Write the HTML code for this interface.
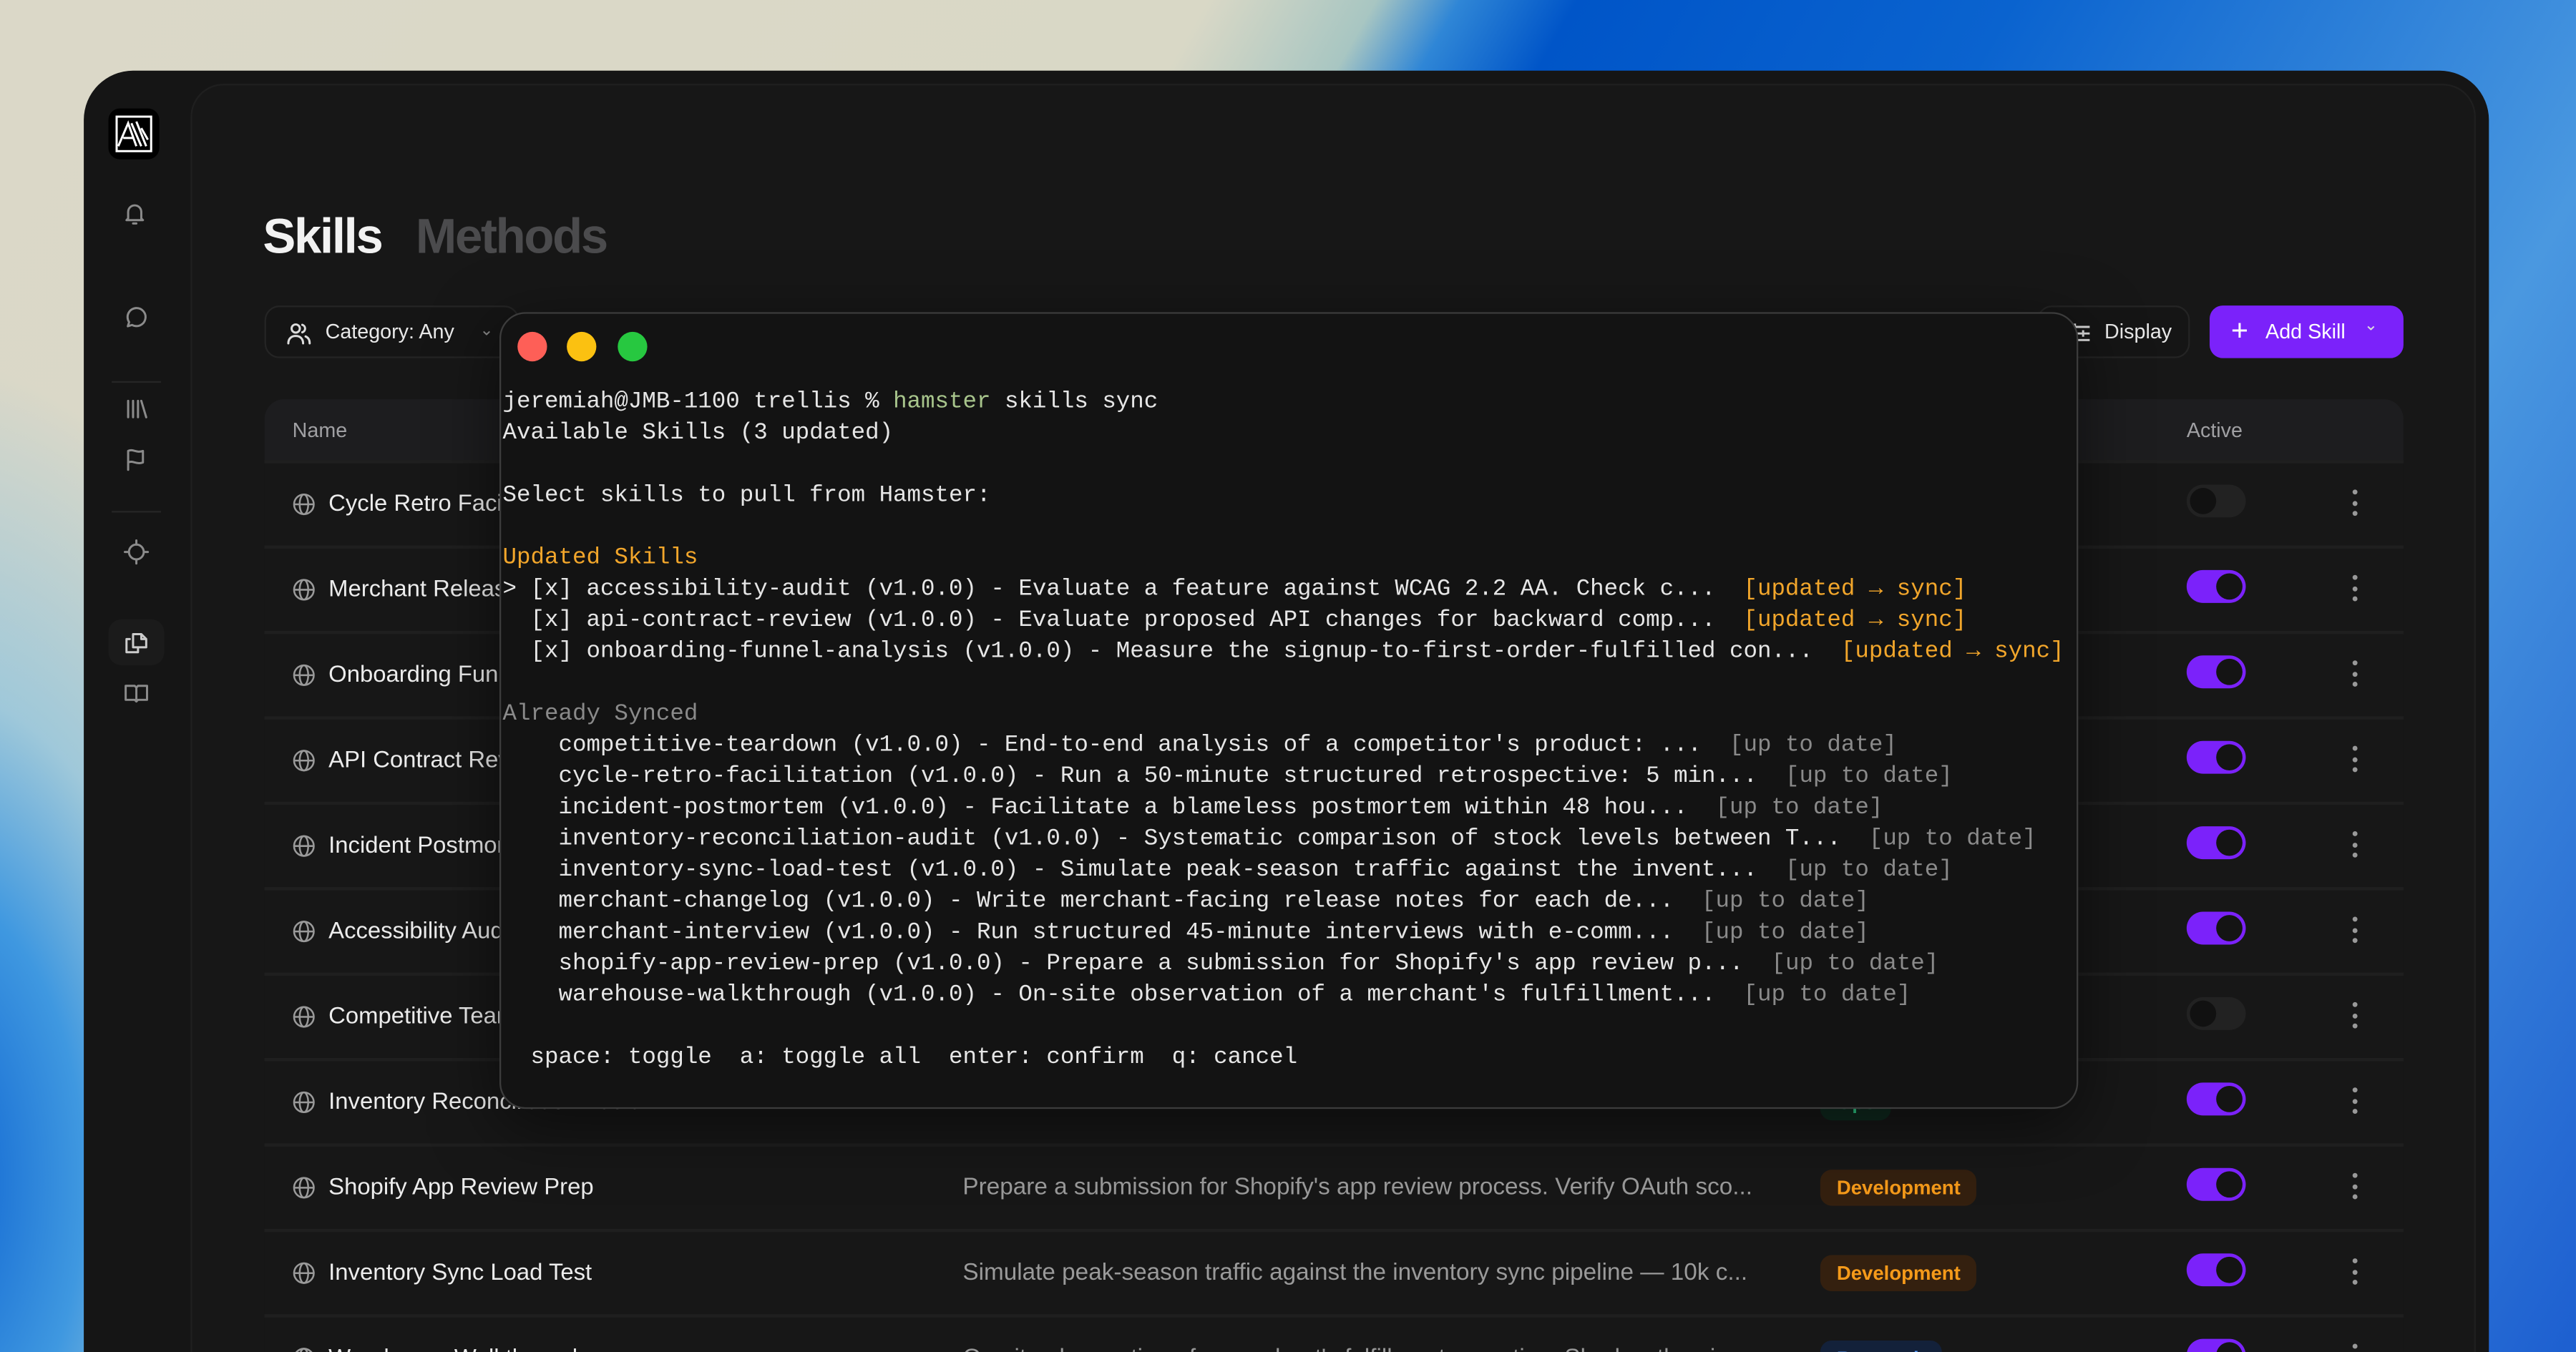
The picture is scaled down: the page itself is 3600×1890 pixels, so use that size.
<!DOCTYPE html>
<html><head><meta charset="utf-8">
<style>
*{margin:0;padding:0;box-sizing:border-box}
html,body{width:3600px;height:1890px;overflow:hidden;background:#d9d7c9}
#s{position:absolute;left:0;top:0;width:1568px;height:823px;transform:scale(2.2959,2.2965);transform-origin:0 0;overflow:hidden;font-family:"Liberation Sans",sans-serif;
background:
radial-gradient(ellipse 260px 500px at -40px 720px,#0a5fd0 0%,#3f98e0 35%,rgba(120,190,230,.6) 60%,rgba(217,215,201,0) 100%),
linear-gradient(120deg,#dbd8c8 0%,#d9d8c6 36%,#a8c6c2 41%,#2f86d6 43.5%,#0055c8 47%,#0a63cf 60%,#4a98e0 80%,#1d5fd0 100%);}
.win{position:absolute;left:51px;top:43px;width:1464px;height:820px;background:#151515;border-radius:30px}
.panel{position:absolute;left:116px;top:51px;width:1391px;height:800px;background:#171717;border:1px solid #1f1f1f;border-radius:20px}
.logo{position:absolute;left:66px;top:66px;width:31px;height:31px;background:#000;border-radius:7px}
.sep{position:absolute;left:68px;width:30px;height:1px;background:#262626}
.ic{position:absolute;width:16px;height:16px}
.ic svg{width:16px;height:16px;fill:none;stroke:#8b8b8b;stroke-width:1.3;stroke-linecap:round;stroke-linejoin:round}
.t1{position:absolute;left:160px;top:128px;font-size:30px;font-weight:bold;color:#f2f2f2;letter-spacing:-1px}
.t2{position:absolute;left:253px;top:128px;font-size:30px;font-weight:bold;color:#4b4b4d;letter-spacing:-1px}
.btn{position:absolute;top:186px;height:32px;border:1px solid #242424;border-radius:9px;background:#151515;color:#e8e8e8;font-size:12.5px;line-height:30px}
.add{position:absolute;left:1345px;top:186px;width:118px;height:32px;background:#7b22fa;border-radius:8px;color:#fff;font-size:12.5px;line-height:32px}
.table{position:absolute;left:161px;top:243px;width:1302px;height:600px;border-radius:12px;overflow:hidden;background:#171717}
.th{height:38px;background:#1d1d1f;color:#a0a0a3;font-size:12.5px;line-height:38px;position:relative}
.row{position:absolute;left:0;width:1302px;height:52px;border-top:2px solid #1f1f1f}
.row .g{position:absolute;left:17px;top:18px;width:14px;height:14px}
.row .n{position:absolute;left:39px;top:17px;color:#ececec;font-size:14.3px}
.row .d{position:absolute;left:425px;top:17px;color:#9a9a9a;font-size:14.5px}
.tag{position:absolute;left:947px;top:14px;height:22px;padding:0 10px;border-radius:7px;font-size:12px;font-weight:bold;line-height:22px}
.dev{background:#34200f;color:#f59a1a}
.tg{position:absolute;left:1170px;top:13px;width:36px;height:20px;border-radius:10px;background:#7b22fa}
.tg::after{content:"";position:absolute;right:2px;top:2px;width:16px;height:16px;border-radius:50%;background:#141414}
.tg.off{background:#222}
.tg.off::after{left:2px;right:auto;background:#111}
.kb{position:absolute;left:1271px;top:16px;width:4px;height:16px}
.kb i{display:block;width:3px;height:3px;border-radius:50%;background:#999;margin-bottom:3.5px}
.term{position:absolute;left:304px;top:190px;width:961px;height:485px;background:#131313;border:1.5px solid #3c3c3c;border-radius:16px;box-shadow:0 10px 40px rgba(0,0,0,.5)}
.dot{position:absolute;top:11px;width:18px;height:18px;border-radius:50%}
pre{position:absolute;left:1px;top:44.5px;font-family:"Liberation Mono",monospace;font-size:14.15px;line-height:19px;color:#e6e6e6}
.gr{color:#a8c58c}.or{color:#f2a62b}.mu{color:#8a8a8a}
</style></head><body><div id="s">
<div class="win"></div>
<div class="panel"></div>
<div class="logo"><svg width="31" height="31" viewBox="0 0 31 31" fill="none" stroke="#fff" stroke-width="1.3"><rect x="5" y="5" width="21" height="21"/><path d="M6 23 L12 9 L17 23 M9 18 H15 M14 9 L20 23 M17 8 L23 23 M20 12 L24 19"/></svg></div>
<div class="ic" style="left:74px;top:122px"><svg viewBox="0 0 16 16"><path d="M4 11V7a4 4 0 0 1 8 0v4l1 1H3z M7 14h2"/></svg></div>
<div class="ic" style="left:75px;top:185px"><svg viewBox="0 0 16 16"><path d="M8 2.5a5.5 5.5 0 1 1-2.6 10.3L2.8 13.6l.8-2.5A5.5 5.5 0 0 1 8 2.5z"/></svg></div>
<div class="sep" style="top:232px"></div>
<div class="ic" style="left:75px;top:241px"><svg viewBox="0 0 16 16"><path d="M3 3v10M6 3v10M9 3v10M11 3l3 10"/></svg></div>
<div class="ic" style="left:75px;top:272px"><svg viewBox="0 0 16 16"><path d="M3 14V2.5c3-1.5 5 1.5 9 0v7c-4 1.5-6-1.5-9 0"/></svg></div>
<div class="sep" style="top:311px"></div>
<div class="ic" style="left:75px;top:328px"><svg viewBox="0 0 16 16"><circle cx="8" cy="8" r="4.5"/><path d="M8 1v2.5M8 12.5V15M1 8h2.5M12.5 8H15"/></svg></div>
<div style="position:absolute;left:66px;top:377px;width:34px;height:28px;border-radius:8px;background:#1b1b1b"></div>
<div class="ic" style="left:75px;top:383px"><svg viewBox="0 0 16 16" style="stroke:#ccc"><path d="M6 3h5l3 3v5H6z M11 3v3h3 M4 6H2v8h7v-2"/></svg></div>
<div class="ic" style="left:75px;top:414px"><svg viewBox="0 0 16 16"><path d="M1.5 3.5h5.5l1 1 1-1h5.5V12H9l-1 1-1-1H1.5z M8 4.5V13"/></svg></div>
<div class="t1">Skills</div><div class="t2">Methods</div>
<div class="btn" style="left:161px;width:155px"><svg style="position:absolute;left:12px;top:8px" width="16" height="16" viewBox="0 0 16 16" fill="none" stroke="#ddd" stroke-width="1.3" stroke-linecap="round"><circle cx="6" cy="5" r="2.5"/><path d="M1.5 14c0-3 2-4.5 4.5-4.5s4.5 1.5 4.5 4.5M10 2.7a2.4 2.4 0 0 1 0 4.6M12 9.8c1.5.6 2.5 2 2.5 4.2"/></svg><span style="position:absolute;left:36px">Category: Any</span><span style="position:absolute;left:130px;color:#888;font-size:10px">&#8964;</span></div>
<div class="btn" style="left:1240px;width:93px"><svg style="position:absolute;left:18px;top:9px" width="14" height="14" viewBox="0 0 14 14" stroke="#ddd" stroke-width="1.3"><path d="M1 3h12M1 7h12M1 11h12M4 1v4M9 5v4M5 9v4"/></svg><span style="position:absolute;left:40px">Display</span></div>
<div class="add"><span style="position:absolute;left:13px;font-size:18px;font-weight:300;top:-1px">+</span><span style="position:absolute;left:34px">Add Skill</span><span style="position:absolute;left:94px;font-size:10px;top:-3px;color:#ddd">&#8964;</span></div>
<div class="table">
<div class="th"><span style="position:absolute;left:17px">Name</span><span style="position:absolute;left:1170px">Active</span></div>
</div>
<div id="rows" style="position:absolute;left:161px;top:0"></div>
<div class="term">
<div class="dot" style="left:10px;background:#fe5f57"></div>
<div class="dot" style="left:40px;background:#fbc111"></div>
<div class="dot" style="left:71px;background:#27c840"></div>
<pre>jeremiah@JMB-1100 trellis % <span class="gr">hamster</span> skills sync
Available Skills (3 updated)

Select skills to pull from Hamster:

<span class="or">Updated Skills</span>
&gt; [x] accessibility-audit (v1.0.0) - Evaluate a feature against WCAG 2.2 AA. Check c...  <span class="or">[updated → sync]</span>
  [x] api-contract-review (v1.0.0) - Evaluate proposed API changes for backward comp...  <span class="or">[updated → sync]</span>
  [x] onboarding-funnel-analysis (v1.0.0) - Measure the signup-to-first-order-fulfilled con...  <span class="or">[updated → sync]</span>

<span class="mu">Already Synced</span>
    competitive-teardown (v1.0.0) - End-to-end analysis of a competitor's product: ...  <span class="mu">[up to date]</span>
    cycle-retro-facilitation (v1.0.0) - Run a 50-minute structured retrospective: 5 min...  <span class="mu">[up to date]</span>
    incident-postmortem (v1.0.0) - Facilitate a blameless postmortem within 48 hou...  <span class="mu">[up to date]</span>
    inventory-reconciliation-audit (v1.0.0) - Systematic comparison of stock levels between T...  <span class="mu">[up to date]</span>
    inventory-sync-load-test (v1.0.0) - Simulate peak-season traffic against the invent...  <span class="mu">[up to date]</span>
    merchant-changelog (v1.0.0) - Write merchant-facing release notes for each de...  <span class="mu">[up to date]</span>
    merchant-interview (v1.0.0) - Run structured 45-minute interviews with e-comm...  <span class="mu">[up to date]</span>
    shopify-app-review-prep (v1.0.0) - Prepare a submission for Shopify's app review p...  <span class="mu">[up to date]</span>
    warehouse-walkthrough (v1.0.0) - On-site observation of a merchant's fulfillment...  <span class="mu">[up to date]</span>

  space: toggle  a: toggle all  enter: confirm  q: cancel</pre>
</div>
</div>
<script>
var R=[["Cycle Retro Facilitation","",0,0],["Merchant Release Notes","",0,1],["Onboarding Funnel Analysis","",0,1],["API Contract Review","",0,1],["Incident Postmortem","",0,1],["Accessibility Audit","",0,1],["Competitive Teardown","",0,0],["Inventory Reconciliation Audit","",2,1],["Shopify App Review Prep","Prepare a submission for Shopify's app review process. Verify OAuth sco...",1,1],["Inventory Sync Load Test","Simulate peak-season traffic against the inventory sync pipeline — 10k c...",1,1],["Warehouse Walkthrough","On-site observation of a merchant's fulfillment operation. Shadow the pi...",3,1]];
var h="",g='<svg class="g" viewBox="0 0 14 14" fill="none" stroke="#9a9a9a" stroke-width="1.1"><circle cx="7" cy="7" r="6"/><ellipse cx="7" cy="7" rx="2.6" ry="6"/><path d="M1 7h12"/></svg>';
R.forEach(function(r,i){var t=280+i*52;var tag="";
if(r[2]==1)tag='<span class="tag dev">Development</span>';
if(r[2]==2)tag='<span class="tag" style="background:#0f2a1f;color:#2fd08a">Ops</span>';
if(r[2]==3)tag='<span class="tag" style="background:#13213a;color:#5aa0ff">Research</span>';
h+='<div class="row" style="top:'+t+'px">'+g+'<span class="n">'+r[0]+'</span><span class="d">'+r[1]+'</span>'+tag+'<span class="tg'+(r[3]?'':' off')+'"></span><span class="kb"><i></i><i></i><i></i></span></div>';});
document.getElementById("rows").innerHTML=h;
</script>
</body></html>
